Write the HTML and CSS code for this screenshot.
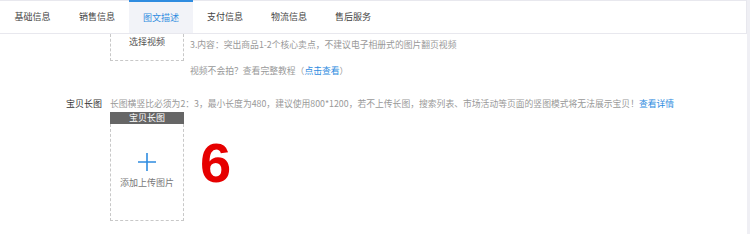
FILE: index.html
```html
<!DOCTYPE html>
<html lang="zh">
<head>
<meta charset="utf-8">
<title>图文描述</title>
<link rel="stylesheet" href="styles.css">
</head>
<body>
<div class="page">
  <div class="main">
    <nav class="tabs">
      <div class="tab">基础信息</div>
      <div class="tab">销售信息</div>
      <div class="tab active">图文描述</div>
      <div class="tab">支付信息</div>
      <div class="tab">物流信息</div>
      <div class="tab">售后服务</div>
    </nav>
    <div class="content">
      <div class="row video-row">
        <div class="label"></div>
        <div class="video-box">选择视频</div>
        <div class="video-tips">
          <p class="tip">3.内容：突出商品1-2个核心卖点，不建议电子相册式的图片翻页视频</p>
          <p class="tip second">视频不会拍？查看完整教程（<a class="link">点击查看</a>）</p>
        </div>
      </div>
      <div class="row long-row">
        <div class="label">宝贝长图</div>
        <div class="long-body">
          <p class="tip">长图横竖比必须为2：3，最小长度为480，建议使用800*1200，若不上传长图，搜索列表、市场活动等页面的竖图模式将无法展示宝贝！<a class="link">查看详情</a></p>
          <div class="upload-wrap">
            <div class="upload">
              <div class="upload-head">宝贝长图</div>
              <div class="upload-box">
                <svg class="plus" width="18" height="18" viewBox="0 0 18 18"><path d="M9 0V18M0 9H18" stroke="#2f8ce0" stroke-width="1.6" fill="none"/></svg>
                <span class="upload-text">添加上传图片</span>
              </div>
            </div>
            <div class="num">6</div>
          </div>
        </div>
      </div>
    </div>
  </div>
  <div class="scroll"></div>
</div>
</body>
</html>
```

FILE: styles.css
```css
html, body {
  margin: 0;
  padding: 0;
  background: #fff;
}
body {
  font-family: "Noto Sans CJK SC", "Noto Sans", sans-serif;
  width: 750px;
  height: 234px;
  overflow: hidden;
}
.page {
  display: flex;
  width: 750px;
  height: 234px;
}
.main {
  flex: 1;
  display: flex;
  flex-direction: column;
}
.scroll {
  width: 3px;
  background: #efeff4;
}
.tabs {
  display: flex;
  height: 32px;
  border-top: 1px solid #e8e8ee;
  border-bottom: 1px solid #e8e8ee;
  border-right: 1px solid #e8e8ee;
  box-sizing: content-box;
}
.tab {
  width: 64px;
  display: flex;
  align-items: center;
  justify-content: center;
  font-size: 9px;
  color: #444;
  box-sizing: border-box;
  padding-bottom: 1px;
}
.tab:first-child {
  width: 65px;
}
.tab.active {
  background: #f2f3f8;
  color: #2f8ce0;
  border-top: 2px solid #2f8ce0;
  margin-top: -1px;
  height: 33px;
}
.content {
  display: flex;
  flex-direction: column;
}
.row {
  display: flex;
}
.label {
  width: 102px;
  flex: none;
  text-align: right;
  font-size: 9px;
  line-height: 14px;
  color: #333;
}
.tip {
  margin: 0;
  font-size: 8.8px;
  line-height: 14px;
  color: #999;
  white-space: nowrap;
}
.link {
  color: #2f8ce0;
}
.video-box {
  margin-left: 8px;
  width: 74px;
  height: 27px;
  box-sizing: border-box;
  border: 1px dashed #c8c8c8;
  border-top: none;
  text-align: center;
  font-size: 9px;
  line-height: 14px;
  padding-top: 1px;
  color: #555;
}
.video-tips {
  margin-left: 6px;
  padding-top: 4px;
}
.tip.second {
  margin-top: 12px;
}
.long-row {
  margin-top: 19px;
}
.long-body {
  margin-left: 8px;
  display: flex;
  flex-direction: column;
}
.upload-wrap {
  display: flex;
  margin-top: 1px;
}
.upload {
  width: 74px;
  display: flex;
  flex-direction: column;
}
.upload-head {
  height: 12px;
  background: #666;
  color: #fff;
  font-size: 9px;
  line-height: 12px;
  text-align: center;
}
.upload-box {
  height: 97px;
  box-sizing: border-box;
  border: 1px dashed #c8c8c8;
  border-top: none;
  display: flex;
  flex-direction: column;
  align-items: center;
  padding-top: 29px;
}
.plus {
  display: block;
}
.upload-text {
  margin-top: 5px;
  font-size: 9px;
  line-height: 14px;
  color: #777;
}
.num {
  margin-left: 16px;
  margin-top: 23px;
  font-family: "Liberation Sans", Arial, sans-serif;
  font-weight: bold;
  font-size: 56px;
  line-height: 56px;
  color: #e60000;
}
```
